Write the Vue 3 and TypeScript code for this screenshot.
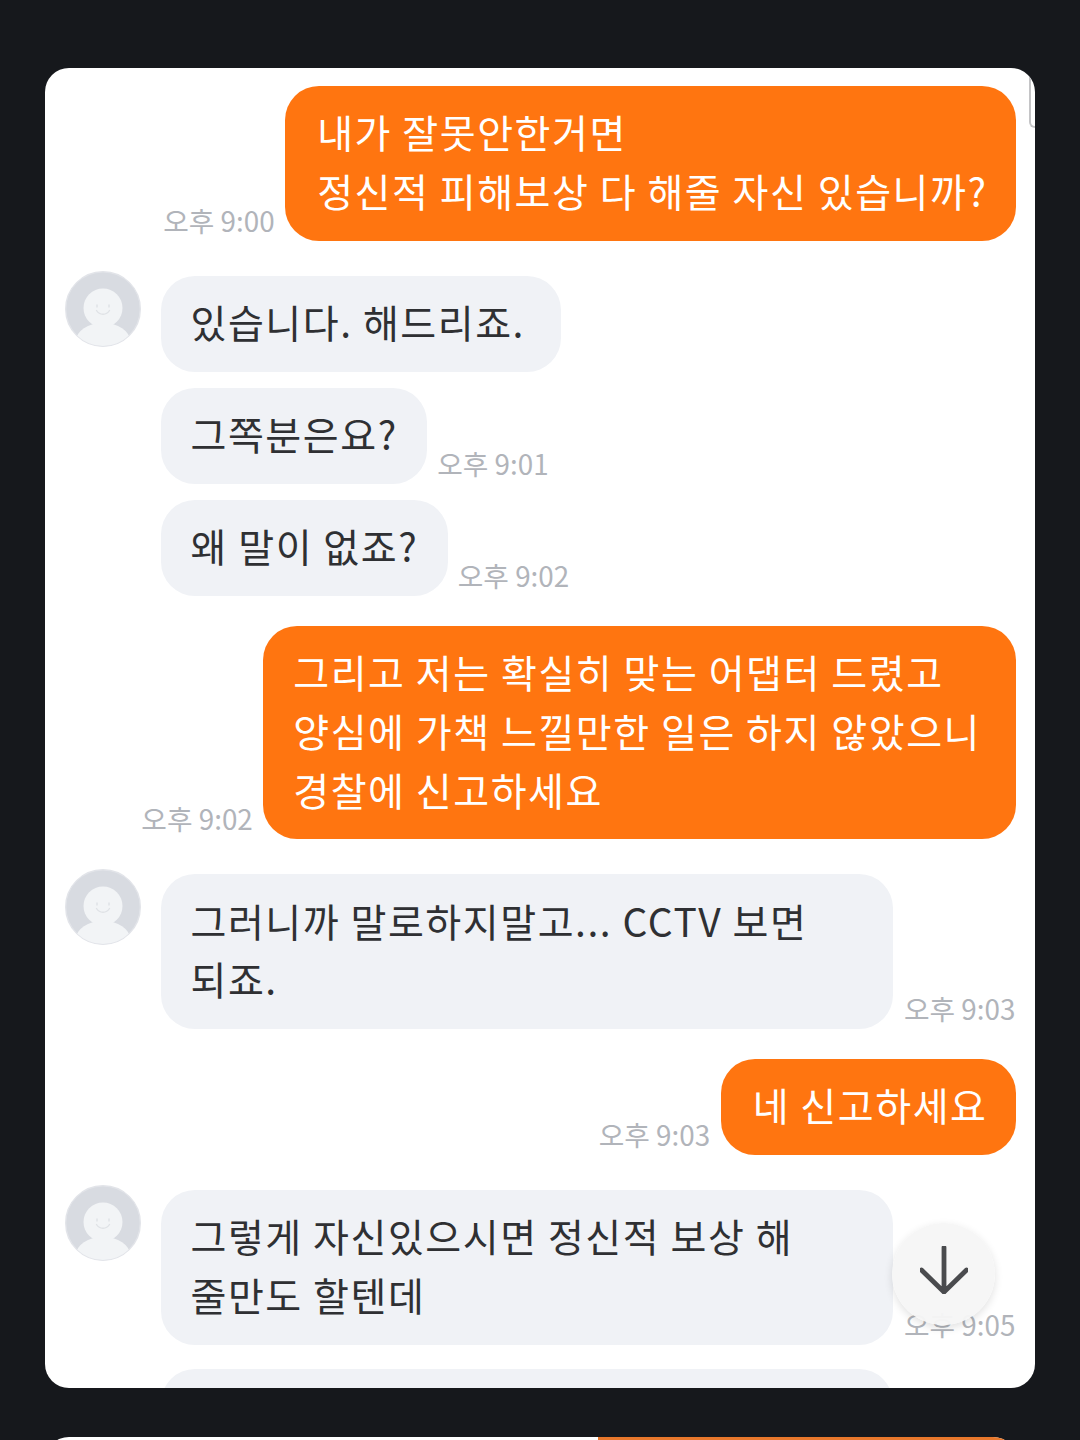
<script setup lang="ts">
interface Msg {
  mine: boolean
  lines: string[]
  time: string
  avatar?: boolean
  wide?: boolean
  roomy?: boolean
  gap: number
}

const messages: Msg[] = [
  { mine: true, lines: ['내가 잘못안한거면', '정신적 피해보상 다 해줄 자신 있습니까?'], time: '오후 9:00', gap: 0 },
  { mine: false, avatar: true, roomy: true, lines: ['있습니다. 해드리죠.'], time: '', gap: 35 },
  { mine: false, lines: ['그쪽분은요?'], time: '오후 9:01', gap: 16 },
  { mine: false, lines: ['왜 말이 없죠?'], time: '오후 9:02', gap: 16 },
  { mine: true, roomy: true, lines: ['그리고 저는 확실히 맞는 어댑터 드렸고', '양심에 가책 느낄만한 일은 하지 않았으니', '경찰에 신고하세요'], time: '오후 9:02', gap: 30 },
  { mine: false, avatar: true, wide: true, lines: ['그러니까 말로하지말고... CCTV 보면', '되죠.'], time: '오후 9:03', gap: 35 },
  { mine: true, lines: ['네 신고하세요'], time: '오후 9:03', gap: 30 },
  { mine: false, avatar: true, wide: true, lines: ['그렇게 자신있으시면 정신적 보상 해', '줄만도 할텐데'], time: '오후 9:05', gap: 35 },
  { mine: false, wide: true, lines: ['', ''], time: '', gap: 24 },
]
</script>

<template>
  <div class="screen">
    <section class="card">
      <span class="edge"></span>
      <div class="list">
        <div
          v-for="(m, i) in messages"
          :key="i"
          class="row"
          :class="{ mine: m.mine }"
          :style="{ marginTop: m.gap + 'px' }"
        >
          <div v-if="!m.mine" class="avatar-slot">
            <svg v-if="m.avatar" class="avatar" viewBox="0 0 76 76">
              <defs>
                <clipPath id="round"><circle cx="38" cy="38" r="37" /></clipPath>
              </defs>
              <circle cx="38" cy="38" r="37.3" fill="#d8dbe1" stroke="#e2e4e9" stroke-width="1.4" />
              <g clip-path="url(#round)">
                <ellipse cx="38" cy="70" rx="27" ry="18" fill="#f2f4f6" />
                <circle cx="38" cy="37" r="19.5" fill="#f2f4f6" />
              </g>
              <path d="M32 34v2M44 34v2" stroke="#dfe2e6" stroke-width="1.4" stroke-linecap="round" fill="none" />
              <path d="M31.5 39.5c3 5 10 5 13 0" stroke="#dfe2e6" stroke-width="1.4" stroke-linecap="round" fill="none" />
            </svg>
          </div>
          <span v-if="m.mine" class="time">{{ m.time }}</span>
          <div class="bubble" :class="{ wide: m.wide, roomy: m.roomy }">
            <p v-for="(line, j) in m.lines" :key="j" class="line">{{ line }}</p>
          </div>
          <span v-if="!m.mine && m.time" class="time">{{ m.time }}</span>
        </div>
      </div>
      <button class="down" aria-label="맨 아래로">
        <svg viewBox="0 0 48 48" width="48" height="48">
          <path d="M24 1.5V46M1.5 24 24 46 46.5 24" fill="none" stroke="#4a4b4e" stroke-width="4.8" stroke-linecap="round" stroke-linejoin="round" />
        </svg>
      </button>
    </section>
    <div class="next">
      <div class="next-orange"></div>
    </div>
  </div>
</template>

<style>
html,
body {
  margin: 0;
  background: #16181c;
}
</style>

<style scoped>
.screen {
  width: 1080px;
  height: 1440px;
  box-sizing: border-box;
  padding: 68px 45px 0;
  background: #16181c;
  overflow: hidden;
  font-family: "Noto Sans CJK KR", "Noto Sans", sans-serif;
}
.card {
  position: relative;
  height: 1320px;
  background: #fff;
  border-radius: 24px;
  overflow: hidden;
}
.edge {
  position: absolute;
  top: -10px;
  right: 0;
  width: 6px;
  height: 70px;
  box-sizing: border-box;
  border: 2px solid #c4c4c6;
  border-right: 0;
  border-radius: 0 0 0 10px;
}
.list {
  display: flex;
  flex-direction: column;
  padding: 18px 19px 0 20px;
}
.row {
  display: flex;
  align-items: flex-end;
  gap: 11px;
}
.row.mine {
  justify-content: flex-end;
  gap: 10.5px;
}
.avatar-slot {
  flex: none;
  width: 76px;
  margin-right: 9px;
  align-self: flex-start;
}
.avatar {
  display: block;
  width: 76px;
  height: 76px;
  margin-top: -5px;
}
.bubble {
  box-sizing: border-box;
  padding: 16.2px 29.5px 21px 29.5px;
  border-radius: 34px;
  background: #f0f2f6;
  color: #2f3033;
}
.bubble.wide {
  width: 732px;
}
.bubble.roomy {
  padding-right: 35.5px;
}
.bubble:not(.wide) + .time {
  margin-left: -1px;
}
.mine .bubble {
  padding-left: 32px;
  padding-right: 28.5px;
  background: #ff7510;
  color: #fff;
}
.mine .bubble.roomy {
  padding-left: 30px;
  padding-right: 35px;
}
.line {
  margin: 0;
  min-height: 58.8px;
  font-size: 39px;
  line-height: 58.8px;
  letter-spacing: 1.55px;
  white-space: nowrap;
}
.time {
  flex: none;
  color: #b1b4ba;
  font-size: 27.8px;
  line-height: 42px;
  white-space: nowrap;
}
.down {
  position: absolute;
  left: 847px;
  top: 1155px;
  display: flex;
  align-items: center;
  justify-content: center;
  box-sizing: border-box;
  width: 103px;
  height: 102px;
  padding: 0 0 8px;
  border: 0;
  border-radius: 50%;
  background: rgba(246, 246, 246, 0.96);
  box-shadow: 0 3px 8px rgba(0, 0, 0, 0.12);
}
.next {
  height: 60px;
  margin: 49px 18px 0 0;
  padding-left: 553px;
  background: #fff;
  border-radius: 24px 24px 0 0;
  overflow: hidden;
}
.next-orange {
  height: 60px;
  background: #e8782c;
}
</style>
